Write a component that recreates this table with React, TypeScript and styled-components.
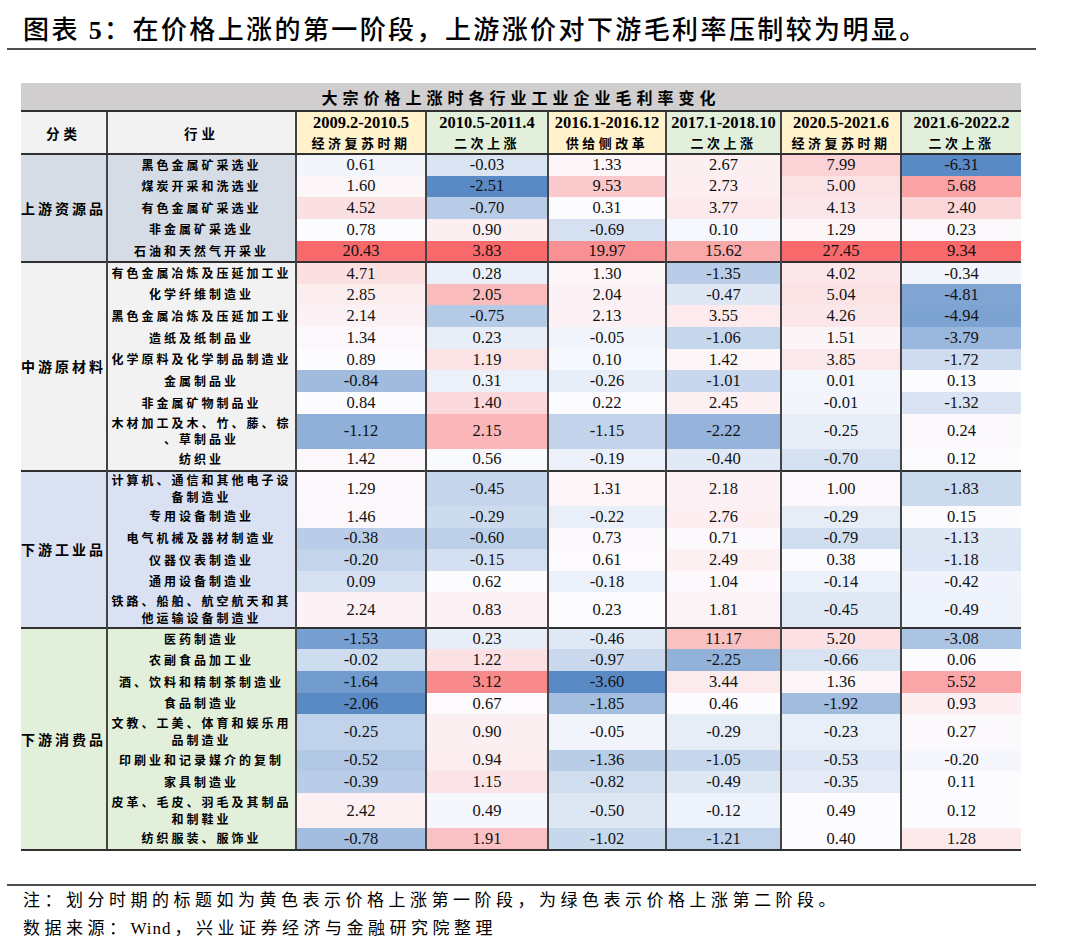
import React from "react";
import styled, { createGlobalStyle } from "styled-components";

const GlobalStyle = createGlobalStyle`
  html, body { margin: 0; padding: 0; background: #ffffff; }
  body { width: 1080px; height: 945px; overflow: hidden; }
`;

const CJK = `"Noto Sans CJK SC", sans-serif`;
const SERIF = `"Liberation Serif", "Noto Sans CJK SC", serif`;
const LINE = "#303030";
const VLINE = "#444444";

const Page = styled.div`
  width: 1080px;
  height: 945px;
  box-sizing: border-box;
  padding-left: 7px;
  display: flex;
  flex-direction: column;
  background: #ffffff;
  color: #000000;
`;

const TitleBar = styled.header`
  width: 1013px;
  height: 34px;
  padding: 14px 0 0 16px;
  border-bottom: 2px solid #4d4d4d;
`;

const TitleText = styled.h1`
  margin: 0;
  font-family: ${SERIF};
  font-size: 26px;
  line-height: 34px;
  font-weight: 500;
  letter-spacing: 2.4px;
  white-space: nowrap;
`;

const TitleNum = styled.span`
  font-weight: 700;
`;

const Table = styled.table`
  margin: 33px 0 0 14px;
  width: 1000px;
  table-layout: fixed;
  border-collapse: collapse;
  border-spacing: 0;
`;

const TitleCell = styled.td`
  height: 27px;
  padding: 0;
  background: #d0cece;
  border-bottom: 2px solid ${LINE};
  text-align: center;
  vertical-align: middle;
  font-family: ${CJK};
  font-weight: 700;
  font-size: 16px;
  letter-spacing: 5px;
  line-height: 20px;
`;

const HeadRow = styled.tr`
  height: 39px;
`;

const HeadCell = styled.th<{ $tone: "gray" | "yellow" | "green"; $first?: boolean }>`
  padding: 1px 0 0;
  background: ${(p) =>
    p.$tone === "yellow" ? "#fff2cc" : p.$tone === "green" ? "#e2efda" : "#f2f2f2"};
  border-bottom: 2px solid ${LINE};
  border-left: ${(p) => (p.$first ? "none" : `2px solid ${VLINE}`)};
  text-align: center;
  vertical-align: middle;
  font-weight: 700;
`;

const HeadLabel = styled.span`
  font-family: ${CJK};
  font-size: 13.5px;
  letter-spacing: 4px;
  line-height: 20px;
`;

const Range = styled.div`
  font-family: ${SERIF};
  font-size: 16.5px;
  line-height: 20px;
  font-weight: 700;
`;

const Phase = styled.div`
  font-family: ${CJK};
  font-size: 13px;
  line-height: 20px;
  letter-spacing: 3.5px;
  font-weight: 700;
`;

const DataRow = styled.tr<{ $double: boolean }>`
  height: ${(p) => (p.$double ? "35.3px" : "21.65px")};
`;

const CategoryCell = styled.td<{ $bg: string; $bottom: boolean }>`
  padding: 0;
  background: ${(p) => p.$bg};
  border-top: 2px solid ${LINE};
  border-bottom: ${(p) => (p.$bottom ? `2px solid ${LINE}` : "none")};
  text-align: center;
  vertical-align: middle;
  font-family: ${CJK};
  font-weight: 700;
  font-size: 14px;
  letter-spacing: 3px;
  white-space: nowrap;
`;

const IndustryCell = styled.td<{ $bg: string; $top: boolean; $bottom: boolean }>`
  padding: 0;
  background: ${(p) => p.$bg};
  border-left: 2px solid ${VLINE};
  border-top: ${(p) => (p.$top ? `2px solid ${LINE}` : "none")};
  border-bottom: ${(p) => (p.$bottom ? `2px solid ${LINE}` : "none")};
  text-align: center;
  vertical-align: middle;
  font-family: ${CJK};
  font-weight: 700;
  font-size: 12px;
  line-height: 16.5px;
  letter-spacing: 3px;
  white-space: nowrap;
`;

const ValueCell = styled.td<{ $top: boolean; $bottom: boolean }>`
  padding: 0;
  border-left: 2px solid ${VLINE};
  border-top: ${(p) => (p.$top ? `2px solid ${LINE}` : "none")};
  border-bottom: ${(p) => (p.$bottom ? `2px solid ${LINE}` : "none")};
  text-align: center;
  vertical-align: middle;
  font-family: ${SERIF};
  font-size: 16.5px;
  line-height: 18px;
  color: #111111;
`;

const Footer = styled.footer`
  margin-top: 33px;
  width: 1013px;
  padding: 1px 0 0 16px;
  border-top: 2px solid #4d4d4d;
`;

const Note = styled.p`
  margin: 0;
  font-family: ${SERIF};
  font-size: 17px;
  line-height: 28px;
  letter-spacing: 4.5px;
  white-space: nowrap;
`;

const Latin = styled.span`
  letter-spacing: 1px;
  margin-right: 3px;
`;

type Row = { lines: string[]; values: number[] };
type Group = { name: string; bg: string; rows: Row[] };

const periods: { range: string; phase: string; tone: "yellow" | "green" }[] = [
  { range: "2009.2-2010.5", phase: "经济复苏时期", tone: "yellow" },
  { range: "2010.5-2011.4", phase: "二次上涨", tone: "green" },
  { range: "2016.1-2016.12", phase: "供给侧改革", tone: "yellow" },
  { range: "2017.1-2018.10", phase: "二次上涨", tone: "green" },
  { range: "2020.5-2021.6", phase: "经济复苏时期", tone: "yellow" },
  { range: "2021.6-2022.2", phase: "二次上涨", tone: "green" },
];

const groups: Group[] = [
  {
    name: "上游资源品",
    bg: "#d6dce5",
    rows: [
      { lines: ["黑色金属矿采选业"], values: [0.61, -0.03, 1.33, 2.67, 7.99, -6.31] },
      { lines: ["煤炭开采和洗选业"], values: [1.6, -2.51, 9.53, 2.73, 5.0, 5.68] },
      { lines: ["有色金属矿采选业"], values: [4.52, -0.7, 0.31, 3.77, 4.13, 2.4] },
      { lines: ["非金属矿采选业"], values: [0.78, 0.9, -0.69, 0.1, 1.29, 0.23] },
      { lines: ["石油和天然气开采业"], values: [20.43, 3.83, 19.97, 15.62, 27.45, 9.34] },
    ],
  },
  {
    name: "中游原材料",
    bg: "#f2f2f2",
    rows: [
      { lines: ["有色金属冶炼及压延加工业"], values: [4.71, 0.28, 1.3, -1.35, 4.02, -0.34] },
      { lines: ["化学纤维制造业"], values: [2.85, 2.05, 2.04, -0.47, 5.04, -4.81] },
      { lines: ["黑色金属冶炼及压延加工业"], values: [2.14, -0.75, 2.13, 3.55, 4.26, -4.94] },
      { lines: ["造纸及纸制品业"], values: [1.34, 0.23, -0.05, -1.06, 1.51, -3.79] },
      { lines: ["化学原料及化学制品制造业"], values: [0.89, 1.19, 0.1, 1.42, 3.85, -1.72] },
      { lines: ["金属制品业"], values: [-0.84, 0.31, -0.26, -1.01, 0.01, 0.13] },
      { lines: ["非金属矿物制品业"], values: [0.84, 1.4, 0.22, 2.45, -0.01, -1.32] },
      { lines: ["木材加工及木、竹、藤、棕", "、草制品业"], values: [-1.12, 2.15, -1.15, -2.22, -0.25, 0.24] },
      { lines: ["纺织业"], values: [1.42, 0.56, -0.19, -0.4, -0.7, 0.12] },
    ],
  },
  {
    name: "下游工业品",
    bg: "#d9e1f2",
    rows: [
      { lines: ["计算机、通信和其他电子设", "备制造业"], values: [1.29, -0.45, 1.31, 2.18, 1.0, -1.83] },
      { lines: ["专用设备制造业"], values: [1.46, -0.29, -0.22, 2.76, -0.29, 0.15] },
      { lines: ["电气机械及器材制造业"], values: [-0.38, -0.6, 0.73, 0.71, -0.79, -1.13] },
      { lines: ["仪器仪表制造业"], values: [-0.2, -0.15, 0.61, 2.49, 0.38, -1.18] },
      { lines: ["通用设备制造业"], values: [0.09, 0.62, -0.18, 1.04, -0.14, -0.42] },
      { lines: ["铁路、船舶、航空航天和其", "他运输设备制造业"], values: [2.24, 0.83, 0.23, 1.81, -0.45, -0.49] },
    ],
  },
  {
    name: "下游消费品",
    bg: "#e2efda",
    rows: [
      { lines: ["医药制造业"], values: [-1.53, 0.23, -0.46, 11.17, 5.2, -3.08] },
      { lines: ["农副食品加工业"], values: [-0.02, 1.22, -0.97, -2.25, -0.66, 0.06] },
      { lines: ["酒、饮料和精制茶制造业"], values: [-1.64, 3.12, -3.6, 3.44, 1.36, 5.52] },
      { lines: ["食品制造业"], values: [-2.06, 0.67, -1.85, 0.46, -1.92, 0.93] },
      { lines: ["文教、工美、体育和娱乐用", "品制造业"], values: [-0.25, 0.9, -0.05, -0.29, -0.23, 0.27] },
      { lines: ["印刷业和记录媒介的复制"], values: [-0.52, 0.94, -1.36, -1.05, -0.53, -0.2] },
      { lines: ["家具制造业"], values: [-0.39, 1.15, -0.82, -0.49, -0.35, 0.11] },
      { lines: ["皮革、毛皮、羽毛及其制品", "和制鞋业"], values: [2.42, 0.49, -0.5, -0.12, 0.49, 0.12] },
      { lines: ["纺织服装、服饰业"], values: [-0.78, 1.91, -1.02, -1.21, 0.4, 1.28] },
    ],
  },
];

const colWidths = [86, 189, 130, 122, 118, 115, 120, 120];

/* Excel-style 3-colour scale: min blue, median white, max red */
const LOW = [90, 138, 198];
const MID = [252, 252, 255];
const HIGH = [248, 105, 107];
const scaleGroups = [[0], [1], [2, 3, 4], [5]];

const allRows = groups.flatMap((g) => g.rows);

type Scale = { min: number; mid: number; max: number };
const scales: Scale[] = [];
scaleGroups.forEach((cols) => {
  const vals = allRows.flatMap((r) => cols.map((c) => r.values[c])).sort((a, b) => a - b);
  const n = vals.length;
  const mid = n % 2 ? vals[(n - 1) / 2] : (vals[n / 2 - 1] + vals[n / 2]) / 2;
  const s = { min: vals[0], mid, max: vals[n - 1] };
  cols.forEach((c) => (scales[c] = s));
});

function heat(v: number, col: number): string {
  const s = scales[col];
  let t: number;
  let target: number[];
  if (v >= s.mid) {
    t = s.max === s.mid ? 0 : (v - s.mid) / (s.max - s.mid);
    target = HIGH;
  } else {
    t = (s.mid - v) / (s.mid - s.min);
    target = LOW;
  }
  const c = MID.map((m, i) => Math.round(m + (target[i] - m) * t));
  return `rgb(${c[0]}, ${c[1]}, ${c[2]})`;
}

export default function App() {
  const lastGroup = groups.length - 1;
  return (
    <>
      <GlobalStyle />
      <Page>
        <TitleBar>
          <TitleText>
            图表 <TitleNum>5</TitleNum>：在价格上涨的第一阶段，上游涨价对下游毛利率压制较为明显。
          </TitleText>
        </TitleBar>

        <Table>
          <colgroup>
            {colWidths.map((w, i) => (
              <col key={i} style={{ width: w }} />
            ))}
          </colgroup>
          <thead>
            <tr>
              <TitleCell colSpan={8}>大宗价格上涨时各行业工业企业毛利率变化</TitleCell>
            </tr>
            <HeadRow>
              <HeadCell $tone="gray" $first>
                <HeadLabel>分类</HeadLabel>
              </HeadCell>
              <HeadCell $tone="gray">
                <HeadLabel>行业</HeadLabel>
              </HeadCell>
              {periods.map((p) => (
                <HeadCell key={p.range} $tone={p.tone}>
                  <Range>{p.range}</Range>
                  <Phase>{p.phase}</Phase>
                </HeadCell>
              ))}
            </HeadRow>
          </thead>
          <tbody>
            {groups.map((g, gi) =>
              g.rows.map((r, ri) => {
                const isLast = gi === lastGroup && ri === g.rows.length - 1;
                return (
                  <DataRow key={g.name + ri} $double={r.lines.length > 1}>
                    {ri === 0 && (
                      <CategoryCell rowSpan={g.rows.length} $bg={g.bg} $bottom={gi === lastGroup}>
                        {g.name}
                      </CategoryCell>
                    )}
                    <IndustryCell $bg={g.bg} $top={ri === 0} $bottom={isLast}>
                      {r.lines.map((l, li) => (
                        <React.Fragment key={li}>
                          {li > 0 && <br />}
                          {l}
                        </React.Fragment>
                      ))}
                    </IndustryCell>
                    {r.values.map((v, ci) => (
                      <ValueCell
                        key={ci}
                        $top={ri === 0}
                        $bottom={isLast}
                        style={{ background: heat(v, ci) }}
                      >
                        {v.toFixed(2)}
                      </ValueCell>
                    ))}
                  </DataRow>
                );
              })
            )}
          </tbody>
        </Table>

        <Footer>
          <Note>注：划分时期的标题如为黄色表示价格上涨第一阶段，为绿色表示价格上涨第二阶段。</Note>
          <Note>
            数据来源：<Latin>Wind</Latin>，兴业证券经济与金融研究院整理
          </Note>
        </Footer>
      </Page>
    </>
  );
}
